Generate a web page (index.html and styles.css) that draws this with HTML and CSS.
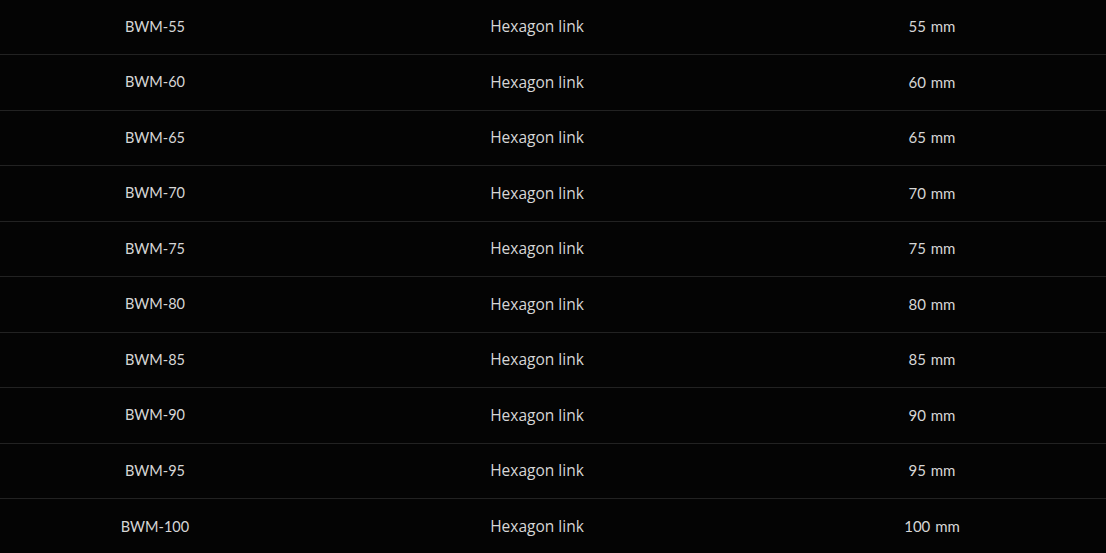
FILE: index.html
```html
<!DOCTYPE html>
<html>
<head>
<meta charset="utf-8">
<link rel="stylesheet" href="styles.css">
</head>
<body>
<div class="table">
  <div class="row"><div class="cell code">BWM-55</div><div class="cell type">Hexagon link</div><div class="cell size">55 mm</div></div>
  <div class="row"><div class="cell code">BWM-60</div><div class="cell type">Hexagon link</div><div class="cell size">60 mm</div></div>
  <div class="row"><div class="cell code">BWM-65</div><div class="cell type">Hexagon link</div><div class="cell size">65 mm</div></div>
  <div class="row"><div class="cell code">BWM-70</div><div class="cell type">Hexagon link</div><div class="cell size">70 mm</div></div>
  <div class="row"><div class="cell code">BWM-75</div><div class="cell type">Hexagon link</div><div class="cell size">75 mm</div></div>
  <div class="row"><div class="cell code">BWM-80</div><div class="cell type">Hexagon link</div><div class="cell size">80 mm</div></div>
  <div class="row"><div class="cell code">BWM-85</div><div class="cell type">Hexagon link</div><div class="cell size">85 mm</div></div>
  <div class="row"><div class="cell code">BWM-90</div><div class="cell type">Hexagon link</div><div class="cell size">90 mm</div></div>
  <div class="row"><div class="cell code">BWM-95</div><div class="cell type">Hexagon link</div><div class="cell size">95 mm</div></div>
  <div class="row last"><div class="cell code">BWM-100</div><div class="cell type">Hexagon link</div><div class="cell size">100 mm</div></div>
</div>
</body>
</html>
```

FILE: styles.css
```css
html, body {
  margin: 0;
  padding: 0;
  background: #040404;
  overflow: hidden;
}
.table {
  display: flex;
  flex-direction: column;
  margin-top: -0.5px;
  width: 100%;
}
.row {
  display: grid;
  grid-template-columns: 310px 454px 336px;
  height: 55.5px;
  box-sizing: border-box;
  border-bottom: 1px solid #222222;
  align-items: center;
}
.row.last {
  border-bottom: none;
}
.cell {
  text-align: center;
  color: #d6d6d6;
  font-size: 14.5px;
  line-height: 20px;
}
.code, .size {
  font-family: "Lato", "Liberation Sans", sans-serif;
}
.size {
  font-size: 15px;
  word-spacing: 1px;
  margin-top: -1px;
}
.type {
  font-family: "Open Sans", "Liberation Sans", sans-serif;
  font-size: 15.5px;
  margin-top: -1px;
}
```
